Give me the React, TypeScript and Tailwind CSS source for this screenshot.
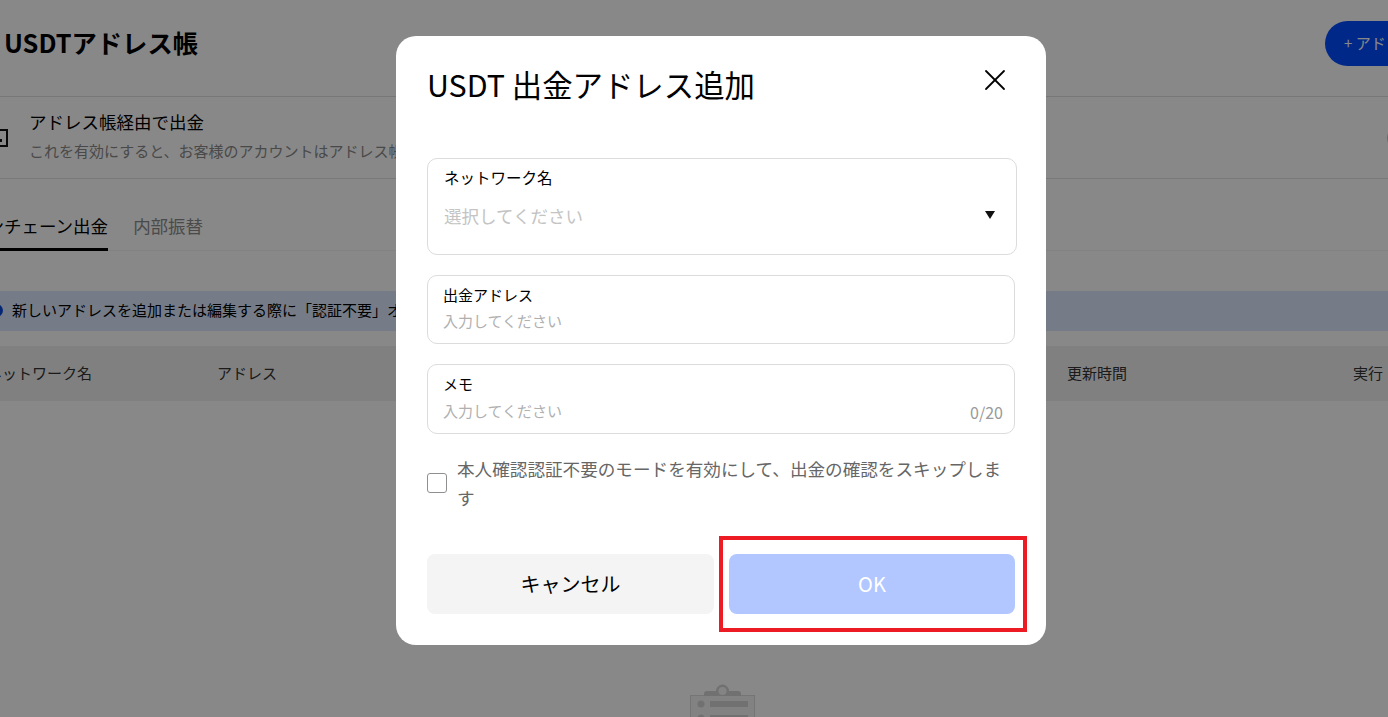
import React from 'react';
import { X } from 'lucide-react';

const FONT = "font-['Noto_Sans_CJK_JP','Noto_Sans',sans-serif]";

const Field = ({ label, placeholder, width = 'w-[588px]', height, counter, inputGap = 'mt-[2px]' }: {
  label: string;
  placeholder: string;
  width?: string;
  height: string;
  counter?: string;
  inputGap?: string;
}) => (
  <div className={`${width} ${height} relative rounded-[10px] border border-[#dcdcdc] pl-[15px] pt-[7px]`}>
    <div className="text-[15px] leading-[24px] text-black">{label}</div>
    <div className={`${inputGap} text-[15px] leading-[24px] text-[#b0b0b0]`}>{placeholder}</div>
    {counter && (
      <span className="absolute right-[11px] bottom-[11px] text-[16px] leading-[20px] text-[#999999]">{counter}</span>
    )}
  </div>
);

export default function App() {
  return (
    <div className={`relative h-[717px] w-full overflow-hidden bg-white ${FONT}`}>
      {/* Page behind the dialog, scrolled a bit to the right */}
      <div className="-ml-[40px] flex w-[1492px] flex-col">
        <div className="flex h-[97px] items-start justify-between border-b border-[#dfdfdf] pl-[44px]">
          <h1 className="mt-[23px] text-[25.3px] font-bold leading-[38px] text-black">USDTアドレス帳</h1>
          <button className="mt-[21px] h-[45px] w-[127px] rounded-l-full bg-[#004bff] pl-[19px] text-left text-[15px] text-white">
            + アドレス
          </button>
        </div>

        <div className="flex h-[82px] items-center border-b border-[#e3e3e3] pl-[28px]">
          <svg width="20" height="18" viewBox="0 0 20 18" fill="none" className="mr-[21px]">
            <rect x="1" y="1" width="18" height="16" stroke="#111" strokeWidth="2" />
            <circle cx="10" cy="7" r="2" fill="#111" />
            <rect x="6" y="10" width="8" height="3" fill="#111" />
          </svg>
          <div className="-mt-[4px]">
            <div className="text-[17.5px] leading-[26px] text-black">アドレス帳経由で出金</div>
            <div className="mt-[5px] text-[15px] leading-[22px] text-[#8a8a8a]">これを有効にすると、お客様のアカウントはアドレス帳</div>
          </div>
          <span className="ml-auto mr-[21px] h-[22px] w-[44px] rounded-full bg-[#c4c4c4]" />
        </div>

        <div className="mt-[28px] flex h-[44px] items-start gap-[25px] border-b border-[#f3f3f3] pl-[9px]">
          <div className="h-[44px] border-b-[3px] border-black pt-[6px] text-[17.5px] leading-[26px] text-black">オンチェーン出金</div>
          <div className="pt-[6px] text-[17.5px] leading-[26px] text-[#8c8c8c]">内部振替</div>
        </div>

        <div className="mt-[40px] flex h-[40px] items-center gap-[9px] bg-[#dbe8fd] pb-[2px] pl-[30px]">
          <span className="h-[13px] w-[13px] rounded-full bg-[#0b49d8]" />
          <span className="text-[15px] text-black">新しいアドレスを追加または編集する際に「認証不要」オ</span>
        </div>

        <div className="mt-[15px] grid h-[55px] grid-cols-[230px_850px_286px_1fr] items-center bg-[#f0f0f0] pl-[27px] text-[15px] text-[#333333]">
          <span>ネットワーク名</span>
          <span>アドレス</span>
          <span className="col-start-3">更新時間</span>
          <span>実行</span>
        </div>

        <div className="mt-[283px] flex justify-center pl-[33px]">
          <svg width="65" height="40" viewBox="0 0 65 40">
            <rect x="0.5" y="11.5" width="64" height="30" fill="#f3f3f3" stroke="#dcdcdc" />
            <path d="M14 10 q0-3 3-3 h9 a6.5 6.5 0 0 1 13 0 h9 q3 0 3 3 v2 H14 z" fill="#d4d4d4" />
            <circle cx="32.5" cy="7" r="4" fill="#f7f7f7" />
            <circle cx="11" cy="20" r="3.5" fill="#d4d4d4" />
            <rect x="20" y="17" width="38" height="6" fill="#d4d4d4" />
            <circle cx="11" cy="34" r="3.5" fill="#d4d4d4" />
            <rect x="20" y="31" width="38" height="6" fill="#d4d4d4" />
          </svg>
        </div>
      </div>

      {/* Dim layer and dialog */}
      <div className="absolute inset-0 flex items-start bg-black/[0.467] pl-[396px] pt-[36px]">
        <div className="relative h-[609px] w-[650px] rounded-[20px] bg-white px-[31px]">
          <div className="flex h-[122px] w-[588px] items-start justify-between">
            <h2 className="mt-[26px] text-[30.4px] font-normal leading-[44px] text-black">USDT 出金アドレス追加</h2>
            <X className="mr-[2px] mt-[26px] h-[36px] w-[36px] text-black" strokeWidth={1.2} />
          </div>

          <div className="flex flex-col gap-[20px]">
            <div className="relative h-[97px] w-[590px] rounded-[10px] border border-[#dcdcdc] pl-[16px] pt-[6px]">
              <div className="text-[15.5px] leading-[24px] text-black">ネットワーク名</div>
              <div className="mt-[13px] text-[17.5px] leading-[28px] text-[#c4c4c4]">選択してください</div>
              <svg width="10" height="8" viewBox="0 0 10 8" className="absolute right-[21px] top-[52px]">
                <path d="M0 0 H10 L5 8 z" fill="#111" />
              </svg>
            </div>
            <Field label="出金アドレス" placeholder="入力してください" height="h-[69px]" />
            <Field label="メモ" placeholder="入力してください" height="h-[70px]" counter="0/20" inputGap="mt-[3px]" />
          </div>

          <div className="mt-[20px] flex h-[58px] w-[588px] items-center gap-[10px]">
            <span className="h-[20px] w-[20px] shrink-0 rounded-[3px] border border-[#8f8f8f] bg-white" />
            <span className="text-[17.6px] leading-[29px] text-[#666666]">本人確認認証不要のモードを有効にして、出金の確認をスキップします</span>
          </div>

          <div className="mt-[42px] flex w-[588px] gap-[15px]">
            <button className="h-[60px] w-[287px] rounded-[8px] bg-[#f4f4f4] text-[20px] text-black">キャンセル</button>
            <button className="h-[60px] w-[286px] rounded-[8px] bg-[#b2c7ff] text-[20px] text-white">OK</button>
          </div>

          {/* Red highlight drawn on top of the OK button */}
          <div className="absolute left-[323px] top-[500px] h-[96px] w-[308px] border-[4px] border-[#ed1c24]" />
        </div>
      </div>
    </div>
  );
}
